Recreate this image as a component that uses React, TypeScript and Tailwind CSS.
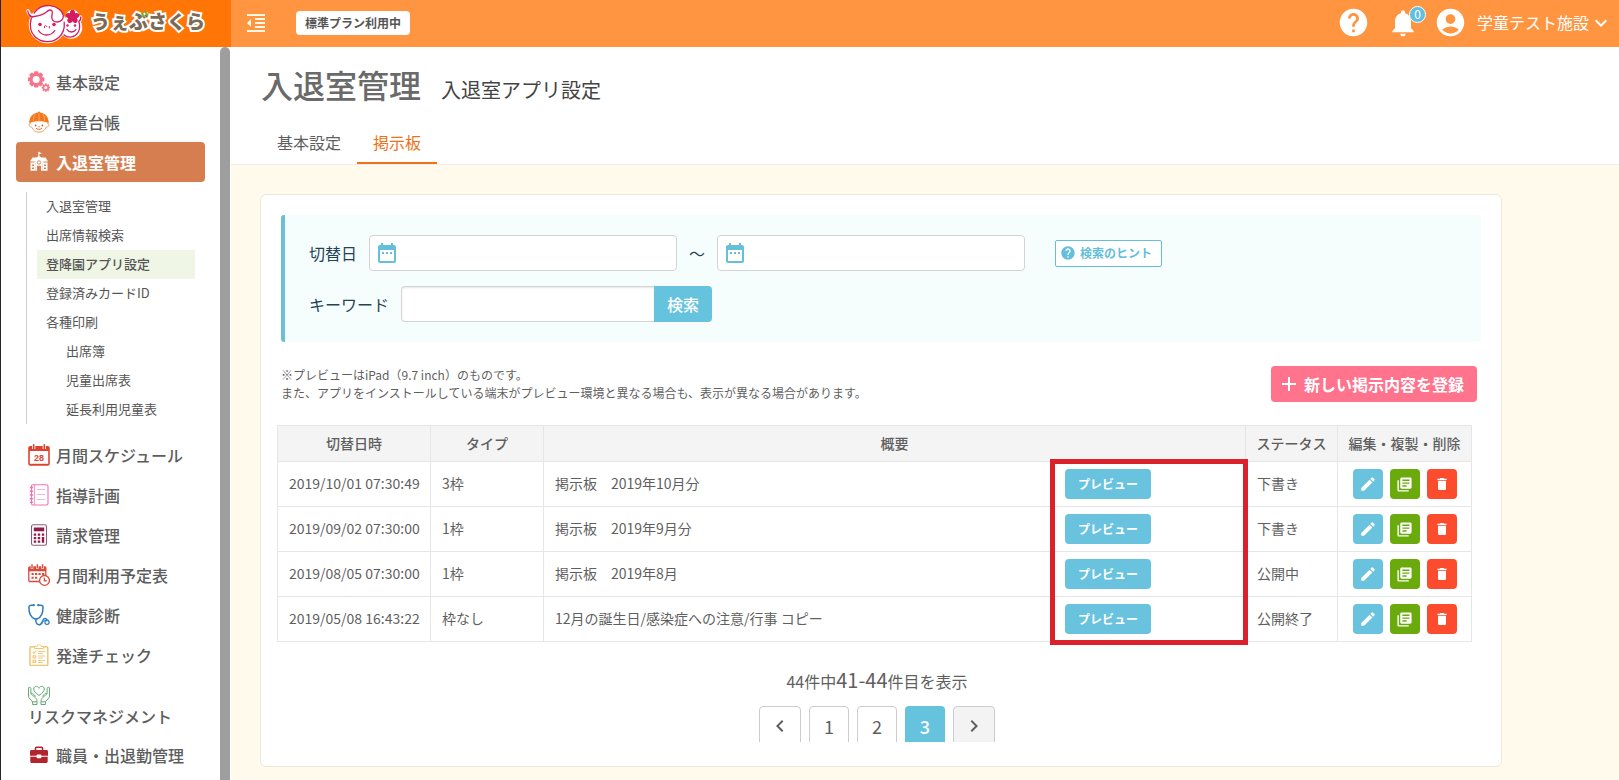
import type { ReactNode } from "react";
import {
  MdAccountCircle,
  MdAdd,
  MdDateRange,
  MdDelete,
  MdEdit,
  MdFormatIndentDecrease,
  MdHelp,
  MdKeyboardArrowDown,
  MdKeyboardArrowLeft,
  MdKeyboardArrowRight,
  MdLibraryBooks,
  MdNotifications,
} from "react-icons/md";

const iconClass = "size-[22px] shrink-0";

function GearsIcon() {
  const teeth = [0, 45, 90, 135, 180, 225, 270, 315];
  return (
    <svg viewBox="0 0 22 22" className={iconClass} aria-hidden="true">
      <g fill="#f4768c">
        {teeth.map((a) => (
          <rect key={a} x="6" y="0.2" width="4.400" height="4" rx="1" transform={`rotate(${a} 8.2 8.4)`} />
        ))}
        {teeth.map((a) => (
          <rect key={a} x="16.9" y="12.4" width="1.8" height="2" transform={`rotate(${a} 17.8 16.6)`} />
        ))}
      </g>
      <circle cx="8.2" cy="8.4" r="5" fill="#fff" stroke="#f4768c" strokeWidth="3" />
      <circle cx="17.8" cy="16.6" r="2.4" fill="#fff" stroke="#f4768c" strokeWidth="1.6" />
    </svg>
  );
}

function ChildIcon() {
  return (
    <svg viewBox="0 0 22 22" className={iconClass} aria-hidden="true">
      <path d="M3 12C1 12 .6 14 1.6 15.2c.6.8 1.6.8 2 .8 1.400 3.400 4.200 5.200 7.400 5.200s6-1.800 7.400-5.200c.6 0 1.400 0 2-.8 1-1.200.6-3.200-1.400-3.200" fill="#fff" stroke="#f0a06a" strokeWidth="1" />
      <path d="M1.200 12C1.200 6 5 1.400 11 1.400S20.800 6 20.800 12c-3-1.300-6.200-1.800-9.800-1.800S4.200 10.700 1.200 12z" fill="#f5771a" />
      <path d="M11 1v9M7.500 2.500C6 4.500 5.300 7 5.300 10M14.500 2.500C16 4.500 16.700 7 16.700 10" stroke="#fbc79c" strokeWidth=".6" fill="none" />
      <circle cx="11" cy="1.400" r="1" fill="#f5771a" />
      <circle cx="7.600" cy="14.500" r=".9" fill="#d5651b" />
      <circle cx="14.400" cy="14.500" r=".9" fill="#d5651b" />
      <path d="M8 17.200c1.800 1.500 4.200 1.500 6 0" stroke="#d5651b" fill="none" strokeWidth=".9" />
      <circle cx="11" cy="15.800" r=".7" fill="#f5771a" />
    </svg>
  );
}

function SchoolIcon() {
  return (
    <svg viewBox="0 0 22 22" className={iconClass} aria-hidden="true">
      <path d="M10.800 .8v5" stroke="#fff" strokeWidth="1" />
      <path d="M10.800 1l3 1.200-3 1.200z" fill="#fff" />
      <path d="M2 10.500 4.500 6.500h4L11 4.800l2.500 1.700h4l2.500 4z" fill="#fff" />
      <path d="M2.500 11.500h5v8.300h-5zM14.500 11.500h5v8.300h-5z" fill="#fff" />
      <path d="M6.500 10.500 11 7l4.500 3.500v1.500h-1v7.800H13v-5H9v5H7.500V12h-1z" fill="#fff" />
      <circle cx="11" cy="11.500" r="1.700" fill="#fff" stroke="#d77e50" strokeWidth=".9" />
      <path d="M4 13.500h2v1.600H4zM4 16.500h2v1.600H4zM16 13.500h2v1.600h-2zM16 16.500h2v1.600h-2z" fill="#d77e50" />
    </svg>
  );
}

function ScheduleIcon() {
  return (
    <svg viewBox="0 0 22 22" className={iconClass} aria-hidden="true">
      <rect x=".2" y="2" width="21.600" height="19.800" rx="2" fill="#dd4330" />
      <rect x="1.800" y="7" width="18.400" height="12.800" fill="#fff" />
      <path d="M5.700 0v5M16.300 0v5" stroke="#fff" strokeWidth="3.200" />
      <path d="M5.700 .8v3.600M16.300 .8v3.600" stroke="#dd4330" strokeWidth="1.600" strokeLinecap="round" />
      <text x="11" y="16.800" textAnchor="middle" fontSize="9" fontWeight="700" fontFamily="Liberation Sans, sans-serif" fill="#dd4330">28</text>
    </svg>
  );
}

function NotebookIcon() {
  return (
    <svg viewBox="0 0 22 22" className={iconClass} fill="none" stroke="#f272b4" aria-hidden="true">
      <rect x="3.500" y=".8" width="16.500" height="20.200" rx="1.500" strokeWidth="1.100" />
      <path d="M6.500 1v20" strokeWidth=".7" />
      <path d="M1.800 3.500h3.400M1.800 7.200h3.400M1.800 11h3.400M1.800 14.700h3.400M1.800 18.400h3.400" strokeWidth="1.400" />
      <path d="M9 5.500h8M9 10.500h8M9 15.500h8" strokeWidth=".8" stroke="#efa6cd" />
    </svg>
  );
}

function CalculatorIcon() {
  return (
    <svg viewBox="0 0 22 22" className={iconClass} aria-hidden="true">
      <rect x="3.500" y=".8" width="15" height="20.400" rx="1.800" fill="#fff" stroke="#8a5f77" strokeWidth="1.100" />
      <rect x="5.800" y="3.500" width="10.400" height="3.800" fill="#8d1c48" />
      <path d="M5.800 9.500h2.400v2.200H5.800zM9.800 9.500h2.400v2.200H9.800zM13.800 9.500h2.400v2.200h-2.400zM5.800 13h2.400v2.200H5.800zM9.800 13h2.400v2.200H9.800zM5.800 16.500h2.400v2.200H5.800zM9.800 16.500h2.400v2.200H9.800zM13.800 13h2.400v5.700h-2.400z" fill="#8d1c48" />
    </svg>
  );
}

function CalendarClockIcon() {
  return (
    <svg viewBox="0 0 22 22" className={iconClass} aria-hidden="true">
      <rect x=".8" y="3" width="17" height="14.500" rx="1" fill="#fff" stroke="#d84a3c" strokeWidth="1.300" />
      <path d="M.5 3h17.600v4.300H.5z" fill="#d84a3c" />
      <path d="M4 .3v4.500M9.300 .3v4.500M14.600 .3v4.500" stroke="#fff" strokeWidth="2.600" />
      <path d="M4 .3v4M9.300 .3v4M14.600 .3v4" stroke="#d84a3c" strokeWidth="1.400" />
      <path d="M3.500 9h2.200v2H3.500zM7 9h2.200v2H7zM10.500 9h2.200v2h-2.200zM14 9h2.200v2H14zM3.500 12.800h2.200v2H3.500zM7 12.800h2.200v2H7z" fill="#d84a3c" />
      <circle cx="16.500" cy="16.400" r="4.900" fill="#fff" stroke="#d84a3c" strokeWidth="1.300" />
      <path d="M16.300 13.400v3.400h2.600" fill="none" stroke="#d84a3c" strokeWidth="1.200" />
    </svg>
  );
}

function StethoscopeIcon() {
  return (
    <svg viewBox="0 0 22 22" className={iconClass} fill="none" stroke="#2b7fc0" strokeWidth="1.500" strokeLinecap="round" aria-hidden="true">
      <path d="M5.500 1.200H3.200C1.800 1.200.9 2 .9 3.300c0 4.700 1.200 9.700 5.600 11.400 1 .4 2 .4 3 0C13.800 13 15 8 15 3.300c0-1.300-.9-2.100-2.300-2.100h-2.200" />
      <path d="M8 15c-.8 3.500.8 5.800 3.300 5.800 3.500 0 2.700-6.300 5.700-6.300 1.600 0 1.800 1.200 1.800 2.200" />
      <path d="M11.500 20.800c3.500 0 2.500-3.500 4.800-4" strokeWidth="1" />
      <circle cx="19" cy="18.200" r="2.100" strokeWidth="1.200" />
      <circle cx="5.800" cy="1.200" r=".4" />
      <circle cx="10.200" cy="1.200" r=".4" />
    </svg>
  );
}

function ChecklistIcon() {
  return (
    <svg viewBox="0 0 22 22" className={iconClass} fill="none" stroke="#f0c672" aria-hidden="true">
      <rect x="2" y="2.800" width="17.800" height="18.600" rx="1.200" strokeWidth="1.500" />
      <path d="M6.500 4.500V2.300h2.600C9.400.2 12.600.2 12.900 2.300h2.600v2.200z" fill="#fff" strokeWidth="1" />
      <path d="M4.800 8.200l1.200 1.200 2-2.600" strokeWidth="1.100" />
      <path d="M5 11.800h2.600v2.200H5zM5 16.200h2.600v2.200H5z" strokeWidth="1.100" />
      <path d="M10 7.500h7M10 9.500h5M10 12h7M10 14h5M10 16.500h7M10 18.500h5" strokeWidth=".9" />
    </svg>
  );
}

function HandsHeartIcon() {
  return (
    <svg viewBox="0 0 22 22" className={iconClass} fill="none" stroke="#62a874" strokeWidth="1" strokeLinejoin="round" aria-hidden="true">
      <path d="M11 11.500C7.500 9 5.700 7.200 5.700 5c0-1.600 1.200-2.700 2.600-2.700 1.200 0 2.200.8 2.700 2 .5-1.200 1.500-2 2.700-2 1.400 0 2.600 1.100 2.600 2.700 0 2.200-1.800 4-5.300 6.500z" />
      <path d="M.6 3.500c1.300-.7 2.300 0 2.300 1.200v5l4.500 4c1.200 1 1.600 2 1.600 3.500v3.300H4.600v-2.700L1 13.800c-.4-.5-.5-1-.5-1.700zM3 9.700c1.200-.8 2-.2 2.700.6l2 2.300M4.600 17.800H9" />
      <path d="M21.400 3.500c-1.300-.7-2.300 0-2.300 1.200v5l-4.500 4c-1.200 1-1.600 2-1.600 3.500v3.300h4.400v-2.700l3.600-4c.4-.5.5-1 .5-1.700zM19 9.700c-1.200-.8-2-.2-2.700.6l-2 2.300M17.400 17.800H13" />
    </svg>
  );
}

function BriefcaseIcon() {
  return (
    <svg viewBox="0 0 22 22" className={iconClass} aria-hidden="true">
      <path d="M7.500 6.500V4.300c0-.7.400-1.100 1.100-1.100h4.800c.7 0 1.100.4 1.100 1.100v2.200" fill="none" stroke="#b3242c" strokeWidth="1.600" />
      <path d="M3.500 6h15c.9 0 1.500.6 1.500 1.500v4.300H2V7.500C2 6.600 2.600 6 3.500 6z" fill="#b3242c" />
      <path d="M2.300 12.700h17.400v4.800c0 .9-.6 1.500-1.500 1.500H3.800c-.9 0-1.500-.6-1.500-1.500z" fill="#b3242c" />
      <rect x="8.600" y="10.600" width="4.800" height="3.600" rx=".8" fill="#fff" />
    </svg>
  );
}

function LogoMark() {
  return (
    <svg viewBox="0 0 57 43" className="h-[43px] w-[57px] shrink-0" aria-hidden="true">
      <g fill="#fff" stroke="#fff" strokeWidth="3.500" strokeLinecap="round" strokeLinejoin="round">
        <circle cx="21.500" cy="22.500" r="17" />
        <circle cx="45" cy="25.500" r="9.500" />
        <circle cx="46.500" cy="14.500" r="5" />
        <path d="M2 9c.5 3 2.500 5 6 5M54.500 15c.3 2-.3 3.500-1.500 4.500" fill="none" />
      </g>
      <g fill="none" stroke="#d81b60" strokeWidth="1.300" strokeLinecap="round">
        <path d="M1.800 9C2 12.500 4.500 14.800 8 14.500c4.500-.4 9.500-2 13.500-5.300M3 13c1.200 1.300 2.500 2 4 2.200" />
        <path d="M8 11C12 5.500 18 3 24 3.600c7 .7 12.500 5 13.300 9.900.4 3.500-2.300 6.500-6 6.500-3.300 0-5.300-1.800-5.500-4.500-.2-3 1.500-5.200 0-6.800-1.100-1-2.800-.7-4.300.5" />
        <path d="M5.300 16C3.500 23 4.200 30 9 34.700c6.500 6.300 17.500 6.500 24 .5 4.300-4 5.800-9.200 5.200-15" />
        <path d="M38 33c4.500 3.500 11 2.500 14-2.500 2-3.300 2-7.500.8-11M54.800 15c.2 2.200-.6 3.600-2 4.500" />
        <path d="M12.500 28.500c3.800 6 12.500 6 16.300 0" />
        <path d="M41 27.500c2 3.300 7 3.300 9 0" />
        <path d="M18.500 25.500v-1.300c.8-.7 1.800-.7 2.300.2M23.300 24.500v1.500" strokeWidth="1" />
      </g>
      <g fill="#d81b60">
        <circle cx="14" cy="22.500" r="1.800" />
        <circle cx="28" cy="22.500" r="1.800" />
        <circle cx="41.500" cy="23.500" r="1.200" />
        <circle cx="49" cy="23.500" r="1.200" />
        {[0, 72, 144, 216, 288].map((a) => (
          <ellipse key={a} cx="46.500" cy="11.300" rx="2.600" ry="3.600" transform={`rotate(${a} 46.500 14.800)`} />
        ))}
      </g>
    </svg>
  );
}

type NavEntry = { label: string; icon: ReactNode };

const topNav: NavEntry[] = [
  { label: "基本設定", icon: <GearsIcon /> },
  { label: "児童台帳", icon: <ChildIcon /> },
];

const bottomNav: NavEntry[] = [
  { label: "月間スケジュール", icon: <ScheduleIcon /> },
  { label: "指導計画", icon: <NotebookIcon /> },
  { label: "請求管理", icon: <CalculatorIcon /> },
  { label: "月間利用予定表", icon: <CalendarClockIcon /> },
  { label: "健康診断", icon: <StethoscopeIcon /> },
  { label: "発達チェック", icon: <ChecklistIcon /> },
];

const subNav = [
  { label: "入退室管理" },
  { label: "出席情報検索" },
  { label: "登降園アプリ設定", current: true },
  { label: "登録済みカードID" },
  { label: "各種印刷" },
  { label: "出席簿", nested: true },
  { label: "児童出席表", nested: true },
  { label: "延長利用児童表", nested: true },
];

const rows = [
  { date: "2019/10/01 07:30:49", type: "3枠", title: "掲示板　2019年10月分", status: "下書き" },
  { date: "2019/09/02 07:30:00", type: "1枠", title: "掲示板　2019年9月分", status: "下書き" },
  { date: "2019/08/05 07:30:00", type: "1枠", title: "掲示板　2019年8月", status: "公開中" },
  { date: "2019/05/08 16:43:22", type: "枠なし", title: "12月の誕生日/感染症への注意/行事 コピー", status: "公開終了" },
];

function NavLink({ label, icon }: NavEntry) {
  return (
    <a href="#" className="flex h-10 items-center gap-1.5 pl-3">
      {icon}
      {label}
    </a>
  );
}

function Header() {
  return (
    <header className="flex h-[47px] bg-[#ff9540]">
      <a href="#" className="flex w-[230px] shrink-0 items-center gap-2 bg-[#ff7506] pl-[25px]">
        <LogoMark />
        <span className="relative pb-1 text-[19px] font-black text-[#7c6a58] [-webkit-text-stroke:4px_#fff] [paint-order:stroke_fill]">
          うぇぶさくら
          <svg viewBox="0 0 8 7" className="absolute top-1 left-[50px] h-[7px] w-2" aria-hidden="true">
            <path d="M1 2.500l2 3M4.500 1l2 3" stroke="#6cb52d" strokeWidth="2" strokeLinecap="round" />
          </svg>
        </span>
      </a>
      <div className="flex flex-1 items-center pr-[6px] pb-[2px] pl-[13px] text-white">
        <button type="button" aria-label="メニューを閉じる">
          <MdFormatIndentDecrease className="size-6 text-[#fff8e4]" />
        </button>
        <span className="ml-7 flex h-6 items-center rounded bg-white px-[9px] text-xs font-bold text-[#555]">標準プラン利用中</span>
        <div className="ml-auto flex items-center">
          <button type="button" aria-label="ヘルプ">
            <MdHelp className="size-[33px]" />
          </button>
          <button type="button" aria-label="お知らせ" className="relative ml-[17px]">
            <MdNotifications className="size-8" />
            <span className="absolute -top-px right-[-7px] flex size-[17px] items-center justify-center rounded-full border border-white bg-[#62bfdd] text-xs leading-none">0</span>
          </button>
          <button type="button" className="ml-[15px] flex items-center text-base">
            <MdAccountCircle className="mr-[10px] size-[33px]" />
            <span className="pb-[2px]">学童テスト施設</span>
            <MdKeyboardArrowDown className="size-6" />
          </button>
        </div>
      </div>
    </header>
  );
}

function Sidebar() {
  return (
    <aside className="flex w-[230px] shrink-0 bg-white">
      <nav className="flex-1 px-[15px] pt-[15px] text-base font-medium text-[#5d5d5d]">
        {topNav.map((n) => (
          <NavLink key={n.label} {...n} />
        ))}
        <a href="#" aria-current="true" className="flex h-10 items-center gap-1.5 rounded-sm bg-[#d77e50] pl-3 font-bold text-white">
          <SchoolIcon />
          入退室管理
        </a>
        <ul className="mt-[10px] mr-[10px] mb-[11px] ml-[10px] border-l border-[#ccc] pl-[10px] text-[13px] font-normal text-[#555]">
          {subNav.map((s) => (
            <li key={s.label}>
              <a
                href="#"
                className={`flex h-[29px] items-center pb-[2px] ${s.nested ? "pl-[29px]" : "pl-[9px]"} ${s.current ? "bg-[#eff6e6] font-medium" : ""}`}
              >
                {s.label}
              </a>
            </li>
          ))}
        </ul>
        {bottomNav.map((n) => (
          <NavLink key={n.label} {...n} />
        ))}
        <a href="#" className="flex h-[60px] flex-col justify-center pl-3 leading-5">
          <HandsHeartIcon />
          <span>リスクマネジメント</span>
        </a>
        <NavLink label="職員・出退勤管理" icon={<BriefcaseIcon />} />
      </nav>
      <div className="mr-px w-[10px] rounded-t-md bg-[#9e9e9e]" />
    </aside>
  );
}

function DateField({ id, label }: { id: string; label: string }) {
  return (
    <div className="relative w-[308px]">
      <MdDateRange className="pointer-events-none absolute top-[6px] left-[6px] size-6 text-[#65bfdb]" />
      <input id={id} type="text" aria-label={label} className="block h-9 w-full rounded border border-[#d4d4d4] bg-white pr-2 pl-9 text-base" />
    </div>
  );
}

function SearchPanel() {
  return (
    <form className="mx-1 flex flex-col gap-[15px] rounded-l-[3px] border-l-4 border-[#6bc0d8] bg-[#f6fdfd] py-5 pl-6 text-base text-[#1f4456]">
      <div className="flex items-center">
        <label htmlFor="date-from" className="mr-3">切替日</label>
        <DateField id="date-from" label="切替日" />
        <span className="w-10 text-center">～</span>
        <DateField id="date-to" label="切替日（終了）" />
        <button type="button" className="ml-[30px] flex h-[27px] items-center gap-1 rounded-xs border border-[#65bfdb] bg-white pr-[9px] pl-1 text-xs font-bold text-[#65bfdb]">
          <MdHelp className="size-4" />
          検索のヒント
        </button>
      </div>
      <div className="flex items-center">
        <label htmlFor="keyword" className="mr-3">キーワード</label>
        <input id="keyword" type="text" className="h-9 w-[253px] rounded-l border border-r-0 border-[#d4d4d4] bg-white px-2 shadow-[inset_0_1px_2px_rgba(0,0,0,0.1)]" />
        <button type="submit" className="h-9 w-[58px] rounded-r bg-[#66c3de] font-medium text-white">検索</button>
      </div>
    </form>
  );
}

const cell = "border border-[#e6e6e6]";
const textCell = "border border-[#e6e6e6] pb-[2px] pl-[11px]";
const actionButton = "flex size-[30px] items-center justify-center rounded-sm text-white";

function BoardTable() {
  return (
    <div className="relative mt-[23px] mr-[5px]">
      <table className="w-full table-fixed border-collapse text-sm text-[#5f5f5f]">
        <colgroup>
          <col className="w-[153px]" />
          <col className="w-[113px]" />
          <col />
          <col className="w-[92px]" />
          <col className="w-[134px]" />
        </colgroup>
        <thead>
          <tr className="h-9 bg-[#f4f4f4]">
            {["切替日時", "タイプ", "概要", "ステータス", "編集・複製・削除"].map((h) => (
              <th key={h} scope="col" className={`${cell} pb-[2px] font-medium whitespace-nowrap`}>
                {h}
              </th>
            ))}
          </tr>
        </thead>
        <tbody>
          {rows.map((r) => (
            <tr key={r.date} className="h-[45px]">
              <td className={`${textCell} whitespace-nowrap`}>{r.date}</td>
              <td className={textCell}>{r.type}</td>
              <td className={`${cell} pl-[11px]`}>
                <div className="flex items-center justify-between">
                  <span className="pb-[2px]">{r.title}</span>
                  <button type="button" className="mr-[94px] h-[30px] w-[86px] rounded-sm bg-[#69c3de] text-xs font-bold text-white">
                    プレビュー
                  </button>
                </div>
              </td>
              <td className={textCell}>{r.status}</td>
              <td className={cell}>
                <div className="flex justify-center gap-[7px]">
                  <button type="button" aria-label="編集" className={`${actionButton} bg-[#69c3de]`}>
                    <MdEdit className="size-[18px]" />
                  </button>
                  <button type="button" aria-label="複製" className={`${actionButton} bg-[#6aaa0c]`}>
                    <MdLibraryBooks className="size-[17px]" />
                  </button>
                  <button type="button" aria-label="削除" className={`${actionButton} bg-[#fd4c2d]`}>
                    <MdDelete className="size-4" />
                  </button>
                </div>
              </td>
            </tr>
          ))}
        </tbody>
      </table>
      <div className="pointer-events-none absolute top-[34px] right-[224px] -bottom-[3px] w-[198px] border-[5px] border-[#d9222b]" />
    </div>
  );
}

function Pagination() {
  const page = "h-[42px] w-10 rounded border border-[#ccc] bg-white pb-[2px]";
  const arrow = "flex h-[42px] w-[42px] items-center justify-center rounded border border-[#ccc] pb-[2px]";
  return (
    <nav aria-label="ページ" className="mt-6 text-center text-[#5f5f5f]">
      <p className="flex h-8 items-baseline justify-center text-base">
        44件中<span className="text-xl">41-44</span>件目を表示
      </p>
      <div className="mt-2 flex h-9 justify-center gap-2 overflow-hidden text-lg">
        <button type="button" aria-label="前へ" className={`${arrow} bg-white`}>
          <MdKeyboardArrowLeft className="size-6" />
        </button>
        <button type="button" className={page}>1</button>
        <button type="button" className={page}>2</button>
        <button type="button" aria-current="page" className="h-[42px] w-10 rounded bg-[#66c3de] pb-[2px] font-medium text-white">3</button>
        <button type="button" aria-label="次へ" className={`${arrow} bg-[#f3f3f3]`}>
          <MdKeyboardArrowRight className="size-6" />
        </button>
      </div>
    </nav>
  );
}

export default function App() {
  return (
    <div className="flex min-h-screen flex-col border-l border-[#2b2424] bg-[#fffaec] font-['Noto_Sans_CJK_JP','Noto_Sans',sans-serif]">
      <Header />
      <div className="flex flex-1">
        <Sidebar />
        <main className="min-w-0 flex-1">
          <div className="border-b border-[#eee] bg-white pl-[30px]">
            <div className="flex h-[75px] items-baseline gap-5 pt-[13px]">
              <h1 className="text-[32px] font-medium text-[#6a6a6a]">入退室管理</h1>
              <p className="text-xl text-[#444]">入退室アプリ設定</p>
            </div>
            <div className="flex h-[42px] text-base text-[#5f5f5f]">
              <a href="#" className="flex items-center px-4 pb-[2px]">基本設定</a>
              <a href="#" aria-current="page" className="flex items-center border-b-2 border-[#ee7318] px-4 text-[#ee7318]">掲示板</a>
            </div>
          </div>
          <section className="mt-[29px] mr-[117px] mb-[13px] ml-[29px] rounded-md border border-[#ece8dc] bg-white px-4 pt-5 pb-6">
            <SearchPanel />
            <div className="pr-2">
              <div className="mt-6 flex items-start justify-between pl-1">
                <p className="text-xs leading-[18px] text-[#5f5f5f]">
                  ※プレビューはiPad（9.7 inch）のものです。
                  <br />
                  また、アプリをインストールしている端末がプレビュー環境と異なる場合も、表示が異なる場合があります。
                </p>
                <button type="button" className="flex h-9 items-center gap-[3px] rounded bg-[#ff738d] pr-[13px] pl-1.5 text-base font-bold text-white">
                  <MdAdd className="size-6" />
                  新しい掲示内容を登録
                </button>
              </div>
              <BoardTable />
              <Pagination />
            </div>
          </section>
        </main>
      </div>
    </div>
  );
}
